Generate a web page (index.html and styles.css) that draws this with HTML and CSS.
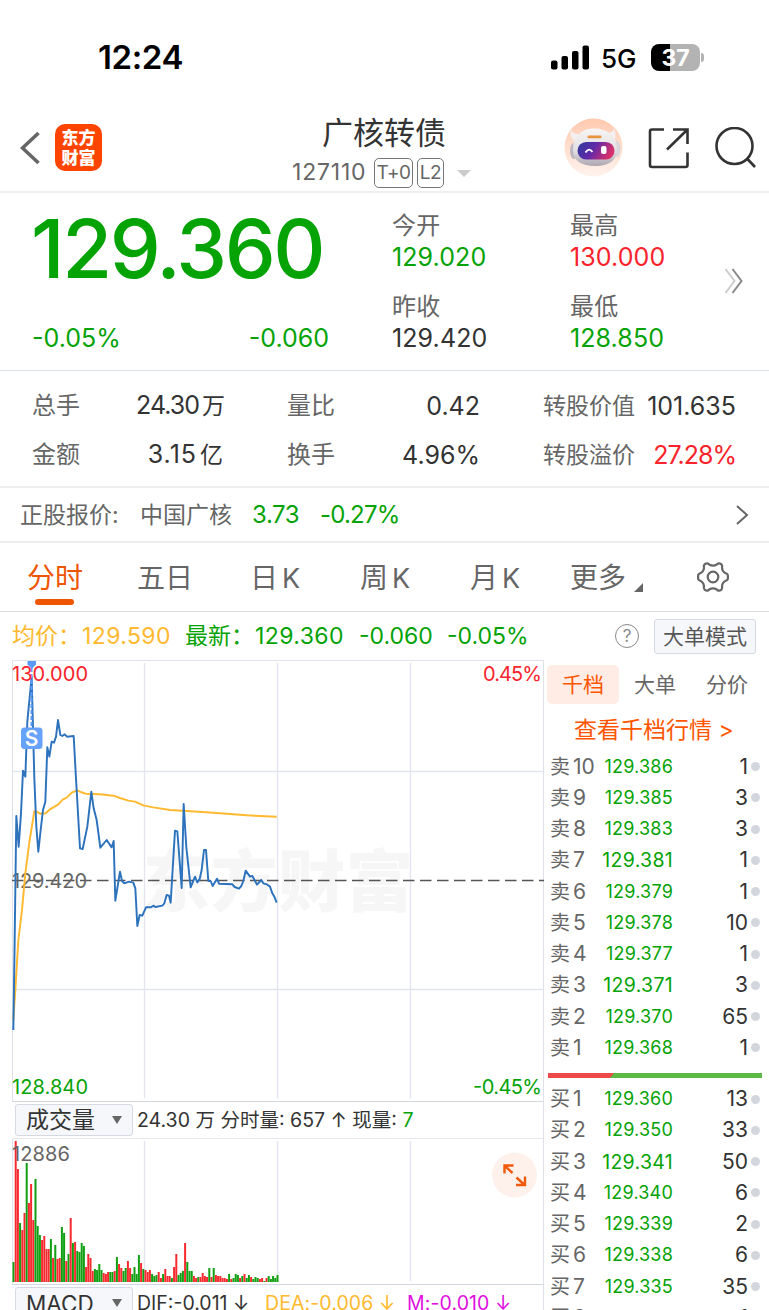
FILE: index.html
```html
<!DOCTYPE html>
<html lang="zh-CN">
<head>
    <meta charset="UTF-8">
    <meta name="viewport" content="width=device-width, initial-scale=1.0">
    <title>广核转债 127110</title>
    <link rel="stylesheet" href="styles.css">
</head>
<body>
    <div class="status-bar">
        <span class="time">12:24</span>
        <svg class="signal" width="38" height="25" viewBox="0 0 38 25">
            <rect x="0" y="15.5" width="6.5" height="9" rx="2"/>
            <rect x="10.5" y="11" width="6.5" height="13.5" rx="2"/>
            <rect x="21" y="6" width="6.5" height="18.5" rx="2"/>
            <rect x="31.5" y="0.5" width="6.5" height="24" rx="2"/>
        </svg>
        <span class="network">5G</span>
        <div class="battery"><span>37</span></div>
        <i class="battery-tip"></i>
    </div>

    <header class="nav">
        <svg class="back" width="20" height="36" viewBox="0 0 20 36">
            <path d="M18.5 3 L2.5 18 L18.5 33" fill="none" stroke="#666" stroke-width="3.6"/>
        </svg>
        <div class="logo"><span>东方</span><span>财富</span></div>
        <div class="title">
            <h1>广核转债</h1>
            <div class="code">
                <span class="num">127110</span>
                <span class="tag tag-t0">T+0</span>
                <span class="tag">L2</span>
                <i class="caret"></i>
            </div>
        </div>
        <svg class="robot" width="59" height="59" viewBox="0 0 59 59">
            <defs>
                <linearGradient id="halo" x1="0" y1="0" x2="0" y2="1">
                    <stop offset="0" stop-color="#ffc9ae"/>
                    <stop offset="1" stop-color="#fff3ee"/>
                </linearGradient>
                <linearGradient id="head" x1="0" y1="0" x2="0" y2="1">
                    <stop offset="0" stop-color="#f8f5f6"/>
                    <stop offset="0.6" stop-color="#e2dee2"/>
                    <stop offset="1" stop-color="#aba6b0"/>
                </linearGradient>
                <linearGradient id="visor" x1="0" y1="0" x2="1" y2="0.3">
                    <stop offset="0" stop-color="#2b3a9c"/>
                    <stop offset="0.5" stop-color="#6029a8"/>
                    <stop offset="1" stop-color="#d8306c"/>
                </linearGradient>
            </defs>
            <circle cx="29.5" cy="29.5" r="29" fill="url(#halo)"/>
            <path d="M7 12 Q5 20 12 24 L20 15 Q10 18 7 12 Z M50 10 Q54 20 48 25 L38 14 Q49 17 50 10 Z" fill="#f4eff1"/>
            <ellipse cx="10" cy="33" rx="4" ry="8" fill="#bdb8c0"/>
            <ellipse cx="52.5" cy="31" rx="4" ry="8" fill="#dad5da"/>
            <path d="M30 10.5 C43 10.5 53 18 53 31 C53 43 44 48 31 48 C18 48 9 43 9 32 C9 19 17 10.5 30 10.5 Z" fill="url(#head)"/>
            <rect x="23.5" y="17.5" width="14" height="2.7" rx="1.2" fill="#e9943f"/>
            <rect x="13.5" y="24" width="37" height="17.5" rx="8.7" fill="url(#visor)"/>
            <path d="M21.500 34.5 Q25 29 28.5 34" fill="none" stroke="#fff" stroke-width="1.8"/>
            <rect x="37" y="28" width="5.5" height="8" rx="2" fill="#fff"/>
        </svg>
        <svg class="share" width="42" height="42" viewBox="0 0 42 42" fill="none" stroke="#333" stroke-width="2.6">
            <path d="M16 2.5 H4 Q2 2.5 2 4.5 V38 Q2 40 4 40 H37.5 Q39.5 40 39.5 38 V25.5"/>
            <path d="M25 2.5 H39.5 V17 M39 3 L19 22.5"/>
        </svg>
        <svg class="search" width="42" height="42" viewBox="0 0 42 42" fill="none" stroke="#333" stroke-width="2.6">
            <circle cx="19.5" cy="19" r="18"/>
            <path d="M32 31.5 L40 40"/>
        </svg>
    </header>

    <section class="quote">
        <div class="price">
            <div class="last">129.360</div>
            <div class="change"><span>-0.05%</span><span>-0.060</span></div>
        </div>
        <dl class="open">
            <dt>今开</dt>
            <dd class="green">129.020</dd>
            <dt>昨收</dt>
            <dd>129.420</dd>
        </dl>
        <dl class="high">
            <dt>最高</dt>
            <dd class="red">130.000</dd>
            <dt>最低</dt>
            <dd class="green">128.850</dd>
        </dl>
        <svg class="more-arrow" width="20" height="26" viewBox="0 0 20 26" fill="none" stroke-width="2">
            <path d="M1.5 1 L10.5 13 L1.5 25" stroke="#ccc"/>
            <path d="M8.5 1 L17.5 13 L8.5 25" stroke="#888"/>
        </svg>
    </section>

    <section class="stats">
        <div class="stat"><label>总手</label><b class="tight">24.30<em>万</em></b></div>
        <div class="stat"><label>量比</label><b>0.42</b></div>
        <div class="stat small"><label>转股价值</label><b>101.635</b></div>
        <div class="stat"><label>金额</label><b class="loose">3.15<em>亿</em></b></div>
        <div class="stat"><label>换手</label><b>4.96%</b></div>
        <div class="stat small"><label>转股溢价</label><b class="tight red">27.28%</b></div>
    </section>

    <section class="underlying">
        <span class="u-label">正股报价:</span>
        <span class="u-name">中国广核</span>
        <span class="u-price green">3.73</span>
        <span class="u-pct green">-0.27%</span>
        <svg width="14" height="22" viewBox="0 0 14 22" fill="none" stroke="#666" stroke-width="2">
            <path d="M2 2 L12 11 L2 20"/>
        </svg>
    </section>

    <nav class="tabs">
        <span class="active">分时</span>
        <span>五日</span>
        <span class="k">日<i>K</i></span>
        <span class="k">周<i>K</i></span>
        <span class="k">月<i>K</i></span>
        <span class="more">更多</span>
        <i class="corner"></i>
        <svg class="gear" width="32" height="32" viewBox="0 0 32 32" fill="none" stroke="#666" stroke-width="2.2">
            <path d="M12.2 3.5 Q16 5.8 19.8 3.5 Q21 1.8 22.9 2.6 L24.5 3.5 Q25.7 4.6 25 6.5 Q25.2 10.6 28.7 12.3 Q30.8 12.8 30.9 14.8 V17.2 Q30.8 19.2 28.7 19.7 Q25.2 21.4 25 25.5 Q25.7 27.4 24.5 28.5 L22.9 29.4 Q21 30.2 19.8 28.5 Q16 26.2 12.2 28.5 Q11 30.2 9.1 29.4 L7.5 28.5 Q6.3 27.4 7 25.5 Q6.8 21.4 3.3 19.7 Q1.2 19.2 1.1 17.2 V14.8 Q1.2 12.8 3.3 12.3 Q6.8 10.6 7 6.5 Q6.3 4.6 7.5 3.5 L9.1 2.6 Q11 1.8 12.2 3.5 Z"/>
            <circle cx="16" cy="16" r="5.3"/>
        </svg>
    </nav>

    <section class="info">
        <span class="avg-label">均价：</span>
        <span class="avg">129.590</span>
        <span class="new-label">最新：</span>
        <span class="new">129.360</span>
        <span class="diff">-0.060</span>
        <span class="pct">-0.05%</span>
        <span class="help">?</span>
        <span class="mode">大单模式</span>
    </section>

    <main class="board">
        <div class="charts">
            <svg class="minute" width="544" height="441" viewBox="0 660 544 441">
                <path class="grid" d="M144.5 663 V1098 M277.5 663 V1098 M410.5 663 V1098 M12 771.5 H544 M12 989.5 H544"/>
                <path class="frame" d="M12.5 1101 V660.5 H544"/>
                <text class="watermark" x="143" y="906" textLength="270">东方财富</text>
                <path d="M12 880.5 H544" stroke="#555" stroke-width="1.6" stroke-dasharray="11.5 5.5"/>
                <text x="12" y="887.5" class="label grey" textLength="75">129.420</text>
                <g transform="translate(0 650) scale(0.33333)" fill="none" stroke-width="5.8" stroke-linejoin="round">
                    <polyline stroke="#ffb92e" points="40,1110 46,1020 55,870 66,780 76,670 89,570 103,484 110,485 120,491 137,490 150,478 175,463 188,449 200,443 215,428 232,421 242,426 257,431 300,433 340,437 360,444 385,452 405,455 430,466 460,472 510,480 560,483 640,488 740,496 830,500"/>
                    <polyline stroke="#2c72bd" points="40,1140 44,870 49,498 56,590 63,490 69,362 76,380 82,215 95,80 103,385 109,530 115,605 122,540 129,480 136,455 142,292 148,320 155,275 162,278 168,260 174,210 181,255 187,258 194,253 201,260 221,258 228,385 240,595 248,597 262,530 274,425 281,475 290,510 301,593 320,570 335,592 341,573 346,752 360,665 366,693 373,700 387,695 400,698 406,715 412,828 419,795 427,797 438,772 453,772 460,767 466,771 487,767 493,760 500,735 507,737 512,758 525,542 532,544 545,714 551,462 559,592 572,712 585,680 592,697 599,687 605,660 612,600 618,600 625,693 632,693 638,708 651,686 657,701 697,703 704,711 717,716 724,708 730,693 737,662 750,680 757,678 771,704 784,690 790,700 800,703 810,710 817,730 824,742 830,758"/>
                </g>
                <path d="M31.5 668 V728" stroke="#5b9bf8" stroke-width="2" stroke-dasharray="4 2"/>
                <path d="M27.5 661 H36 V664.5 L31.8 669 L27.5 664.5 Z" fill="#5b9bf8"/>
                <text x="12" y="680.5" class="label red" textLength="76">130.000</text>
                <text x="542" y="680.5" class="label red" text-anchor="end" textLength="59">0.45%</text>
                <text x="12" y="1093.5" class="label green" textLength="76">128.840</text>
                <text x="542" y="1093.5" class="label green" text-anchor="end" textLength="69">-0.45%</text>
                <rect x="21" y="727.5" width="21.5" height="21.5" rx="3.5" fill="#66a1fa"/>
                <text x="31.7" y="745.5" class="sell" text-anchor="middle">S</text>
            </svg>
            <div class="indicator">
                <span class="select">成交量<i></i></span>
                <span class="values"><em>24.30</em> 万 分时量: <em>657</em> ↑ 现量: <em class="green">7</em></span>
            </div>
            <svg class="volume" width="544" height="145" viewBox="0 1139 544 145">
                <path class="grid" d="M144.5 1141 V1281 M277.5 1141 V1281 M410.5 1141 V1281"/>
                <path class="frame" d="M12.5 1139 V1284"/>
                <g id="bars"></g>
                <text x="12" y="1160.5" class="label grey" textLength="58">12886</text>
                <circle cx="514.5" cy="1175" r="22.5" fill="#fef1ec"/>
                <path d="M504.5 1173.5 V1165.5 H513.5 M505 1166 L512.5 1173 M516.5 1177.5 L524 1184.5 M525 1176.5 V1185 H516" fill="none" stroke="#f05a0a" stroke-width="2.4"/>
            </svg>
            <div class="indicator macd">
                <span class="select">MACD<i></i></span>
                <span class="values dif">DIF:-0.011 ↓</span>
                <span class="values dea">DEA:-0.006 ↓</span>
                <span class="values m">M:-0.010 ↓</span>
            </div>
        </div>

        <aside class="book">
            <div class="book-tabs">
                <span class="on">千档</span>
                <span>大单</span>
                <span>分价</span>
            </div>
            <div class="book-link">查看千档行情 <em>&gt;</em></div>
            <div id="asks"></div>
            <svg class="ratio" width="214" height="5" viewBox="0 0 214 5">
                <rect width="214" height="5" fill="#5bb944"/>
                <path d="M0 0 H66 L62 5 H0 Z" fill="#ec4a49"/>
            </svg>
            <div id="bids"></div>
        </aside>
    </main>
    <script src="script.js"></script>
</body>
</html>
```
FILE: styles.css
```css
* {
    margin: 0;
    padding: 0;
    box-sizing: border-box;
}
body {
    width: 769px;
    height: 1310px;
    overflow: hidden;
    background: #fff;
    color: #333;
    font-family: Inter, "Noto Sans CJK SC", sans-serif;
    font-size: 25px;
    line-height: 1.2;
}
i, em, b {
    font-style: normal;
    font-weight: 400;
}
.green { color: #05a305; fill: #05a305; }
.red { color: #f8232b; fill: #f8232b; }
.grey { fill: #666; }

/* status bar */
.status-bar {
    display: flex;
    align-items: center;
    height: 104px;
    padding: 10px 0 0 98px;
    color: #000;
}
.time {
    width: 453px;
    margin-top: 2px;
    font-size: 33px;
    font-weight: 600;
    letter-spacing: -0.4px;
}
.network {
    width: 50px;
    margin: 3px 0 0 12px;
    font-size: 26px;
    font-weight: 500;
}
.battery {
    width: 49px;
    height: 27px;
    border-radius: 8px;
    background: linear-gradient(to right, #000 38%, #b3b3b3 38%);
    color: #fff;
    font-size: 23px;
    font-weight: 700;
    line-height: 28px;
    text-align: center;
}
.battery-tip {
    width: 3px;
    height: 9px;
    margin-left: 1px;
    border-radius: 0 3px 3px 0;
    background: #b3b3b3;
}

/* nav */
.nav {
    display: flex;
    align-items: center;
    height: 89px;
    padding-left: 20px;
    border-bottom: 2px solid #eee;
}
.logo {
    width: 47px;
    height: 47px;
    margin-left: 15px;
    padding-top: 3px;
    border-radius: 10px;
    background: #ff4400;
    color: #fff;
    font-family: "Noto Sans CJK SC", sans-serif;
    font-size: 17px;
    font-weight: 900;
    text-align: center;
}
.logo span {
    display: block;
    height: 20px;
    line-height: 20px;
}
.title {
    width: 181px;
    margin: 11px 0 0 190px;
}
.title h1 {
    margin-left: 30px;
    font-size: 31px;
    font-weight: 400;
    line-height: 40px;
    white-space: nowrap;
}
.code {
    display: flex;
    align-items: center;
    height: 41px;
    color: #666;
}
.code .num {
    width: 82px;
    font-size: 23px;
    letter-spacing: 0.8px;
}
.tag {
    width: 27px;
    height: 30px;
    margin-right: 4px;
    border: 1px solid #777;
    border-radius: 5px;
    font-size: 19px;
    line-height: 28px;
    text-align: center;
    letter-spacing: -0.5px;
}
.tag-t0 { width: 39px; }
.caret {
    margin-left: 9px;
    border: 7px solid transparent;
    border-top: 7px solid #ccc;
    border-bottom: 0;
}
.robot { margin-left: 91px; }
.share { margin-left: 25px; }
.search { margin-left: 25px; }

/* quote */
.quote {
    display: flex;
    height: 178px;
    padding: 16px 0 0 32px;
    border-bottom: 1px solid #dbe1e8;
}
.price {
    width: 360px;
    color: #05a305;
}
.last {
    height: 81px;
    font-size: 81px;
    font-weight: 500;
    line-height: 81px;
    letter-spacing: -2.4px;
    text-indent: -1px;
}
.change {
    display: flex;
    justify-content: space-between;
    width: 297px;
    margin-top: 32px;
    line-height: 32px;
}
.quote dl { width: 178px; }
.quote dt {
    height: 33px;
    color: #666;
    font-size: 24px;
    line-height: 34px;
    letter-spacing: 0.3px;
}
.quote dd {
    height: 48px;
    line-height: 31px;
    letter-spacing: 0.1px;
}
.more-arrow {
    margin: 59px 0 0 -24px;
}

/* stats */
.stats {
    display: grid;
    grid-template-columns: 192px 193px 193px;
    grid-template-rows: 49px 49px;
    column-gap: 63px;
    height: 117px;
    padding: 10px 0 0 32px;
    border-bottom: 2px solid #eee;
}
.stat {
    display: flex;
    justify-content: space-between;
    align-items: center;
    line-height: 32px;
    white-space: nowrap;
}
.stat label {
    color: #666;
    font-size: 24px;
}
.stat em {
    margin-left: 3px;
    font-size: 23px;
}
.stat .tight { letter-spacing: -1px; }
.stat .loose { letter-spacing: 1px; }
.small label { font-size: 23px; }

/* underlying stock */
.underlying {
    display: flex;
    align-items: center;
    height: 55px;
    padding: 2px 20px 0 20px;
    border-bottom: 2px solid #eee;
    font-size: 24px;
}
.u-label, .u-name {
    width: 120px;
    color: #666;
    font-size: 23px;
}
.u-name { width: 112px; }
.u-price { width: 68px; letter-spacing: -0.4px; }
.u-pct { letter-spacing: -0.8px; }
.underlying svg { margin-left: auto; margin-top: -2px; }

/* period tabs */
.tabs {
    display: flex;
    align-items: center;
    height: 69px;
    padding-left: 27px;
    border-bottom: 1px solid #ddd;
    color: #666;
    font-size: 28px;
}
.tabs span {
    position: relative;
    width: 110px;
    padding-top: 3px;
}
.tabs .k { padding-left: 3px; }
.tabs span i {
    margin-left: 4px;
    font-size: 27px;
}
.tabs .active { color: #ee5500; }
.active::after {
    content: "";
    position: absolute;
    left: 8px;
    bottom: -10px;
    width: 39px;
    height: 6px;
    border-radius: 3px;
    background: #ee5500;
}
.tabs .more { width: 64px; margin-left: -7px; }
.corner {
    margin-top: 20px;
    border-left: 9px solid transparent;
    border-bottom: 9px solid #666;
}
.gear { margin-left: 54px; }

/* latest price line */
.info {
    display: flex;
    align-items: center;
    height: 48px;
    padding-left: 12px;
    color: #05a305;
    font-size: 23px;
    line-height: 30px;
    white-space: nowrap;
}
.avg-label, .avg { width: 70px; color: #ffb92e; }
.avg { width: 103px; letter-spacing: 0.4px; }
.new-label { width: 70px; }
.new { width: 104px; letter-spacing: 0.4px; }
.diff { width: 88px; }
.pct { width: 168px; }
.help {
    width: 24px;
    height: 24px;
    border: 1.5px solid #888;
    border-radius: 50%;
    color: #888;
    font-size: 17px;
    line-height: 22px;
    text-align: center;
}
.mode {
    width: 102px;
    height: 35px;
    margin-left: 15px;
    border: 1px solid #d5dae2;
    border-radius: 3px;
    background: #f5f7fa;
    color: #555;
    font-size: 21px;
    line-height: 33px;
    text-align: center;
}

/* charts */
.board { display: flex; }
.charts {
    width: 544px;
    border-right: 1px solid #dfe1e8;
}
.charts svg { display: block; }
.grid { stroke: #e2e5f0; stroke-width: 1.3; fill: none; }
.frame { stroke: #dfe2ea; fill: none; }
.label { font-size: 20px; }
.watermark {
    fill: #f6f6f6;
    font-family: "Noto Sans CJK SC", sans-serif;
    font-size: 67px;
    font-weight: 900;
}
.sell {
    fill: #fff;
    font-size: 21px;
    font-weight: 600;
}
.indicator {
    display: flex;
    align-items: center;
    height: 38px;
    margin-left: 12px;
    padding-left: 3px;
    border-top: 1px solid #d3d8df;
    border-bottom: 1px solid #e6e8ec;
    white-space: nowrap;
}
.select {
    display: flex;
    align-items: center;
    justify-content: space-between;
    width: 118px;
    height: 32px;
    padding: 0 10px;
    border: 1px solid #d5dae2;
    border-radius: 3px;
    background: #f5f7fa;
    font-size: 23px;
    line-height: 30px;
}
.select i {
    border: 5px solid transparent;
    border-top: 8px solid #666;
    border-bottom: 0;
}
.values {
    margin-left: 4px;
    font-size: 19.5px;
    line-height: 26px;
}
.macd .select { font-size: 22.5px; line-height: 29px; }
.macd .dif { width: 124px; }
.macd .dea { width: 138px; color: #ffb92e; letter-spacing: 0.1px; }
.macd .m { color: #e010e0; letter-spacing: 0.1px; }

/* order book */
.book { width: 225px; }
.book-tabs {
    display: flex;
    padding: 5px 0 0 3px;
    color: #666;
    font-size: 21px;
    line-height: 39px;
    text-align: center;
}
.book-tabs span { width: 72px; }
.book-tabs .on {
    border-radius: 5px;
    background: #ffede5;
    color: #ff5500;
}
.book-link {
    height: 47px;
    padding-left: 30px;
    color: #ff5500;
    font-size: 23px;
    line-height: 52px;
    white-space: nowrap;
}
.row {
    display: flex;
    align-items: center;
    height: 31.25px;
    padding-left: 6px;
    line-height: 26px;
    white-space: nowrap;
}
.row .side {
    width: 46px;
    color: #666;
    font-size: 20px;
}
.row .side em {
    margin-left: 3px;
    font-size: 21px;
}
.row .bid {
    width: 77px;
    color: #05a305;
    font-size: 18px;
    letter-spacing: 0.2px;
    text-align: right;
}
.row .wide { font-size: 19.5px; letter-spacing: 0.3px; }
.row .qty {
    width: 75px;
    font-size: 21px;
    text-align: right;
}
.row .dot {
    width: 9px;
    height: 9px;
    margin-left: 3px;
    border-radius: 50%;
    background: #d3d7dd;
}
.ratio {
    display: block;
    margin: 9px 0 6px 4px;
}
```
FILE: script.js
```js
// volume per minute: colour + bar height
const volume = 'g20 r141 r113 g59 r52 r69 g119 r79 r98 r62 g103 g56 g47 r42 r46 r33 r33 g43 r24 g37 r23 r24 g55 g49 r21 g28 r64 g39 r40 g31 g30 g39 g36 r15 r28 r24 r11 g13 g12 g18 g12 r9 r8 r10 g10 g10 r11 g25 r18 r14 g11 g14 r21 r14 g8 g15 g8 g27 r19 g13 r12 r10 r12 g8 g6 g7 r10 r4 g8 r13 r6 r6 g4 r15 r28 g7 g9 g11 r39 g20 g11 g11 r6 r4 g5 r5 r9 r6 r5 g14 r5 g14 r7 r6 r6 r4 r4 r3 g8 r3 g4 g8 g7 r4 g6 r8 g4 g7 r5 g3 g5 g4 r3 r4 g1 r4 g6 g3 g6 g4 g7';

document.getElementById('bars').innerHTML = volume.split(' ').map((v, i) => {
    const h = Number(v.slice(1));
    const color = v[0] === 'r' ? '#f82a2f' : '#10a012';
    return `<rect x="${(12.5 + i * 2.2).toFixed(2)}" y="${1282 - h}" width="2" height="${h}" fill="${color}"/>`;
}).join('');

const asks = [
    [10, '129.386', 1], [9, '129.385', 3], [8, '129.383', 3], [7, '129.381', 1], [6, '129.379', 1],
    [5, '129.378', 10], [4, '129.377', 1], [3, '129.371', 3], [2, '129.370', 65], [1, '129.368', 1]
];
const bids = [
    [1, '129.360', 13], [2, '129.350', 33], [3, '129.341', 50], [4, '129.340', 6],
    [5, '129.339', 2], [6, '129.338', 6], [7, '129.335', 35], [8, '129.334', 1]
];

function renderRows(id, side, rows) {
    document.getElementById(id).innerHTML = rows.map(([level, price, qty]) => `
        <div class="row">
            <span class="side">${side}<em>${level}</em></span>
            <span class="bid ${price.endsWith('1') ? 'wide' : ''}">${price}</span>
            <span class="qty">${qty}</span>
            <i class="dot"></i>
        </div>`).join('');
}

renderRows('asks', '卖', asks);
renderRows('bids', '买', bids);
```
